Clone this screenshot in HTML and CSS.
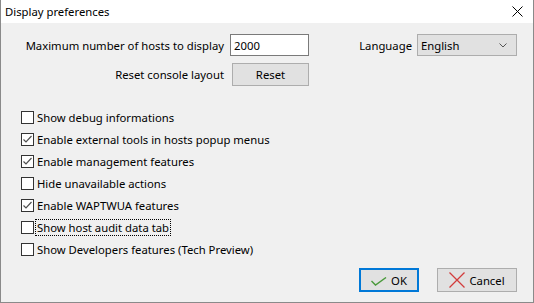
FILE: index.html
```html
<!DOCTYPE html>
<html lang="en">
<head>
  <meta charset="UTF-8" />
  <title>Display preferences</title>
  <link rel="stylesheet" href="styles.css">
</head>
<body>
  <div class="window">
    <div class="titlebar">
      <span class="title">Display preferences</span>
      <svg class="close" width="11" height="11" viewBox="0 0 11 11"><path d="M0.5 0.5 L10.5 10.5 M10.5 0.5 L0.5 10.5" stroke="#000" stroke-width="1" fill="none"/></svg>
    </div>
    <div class="content">
      <div class="top-grid">
        <label class="lbl">Maximum number of hosts to display</label>
        <div class="edit">2000</div>
        <span></span>
        <label class="lbl">Language</label>
        <div class="combo">English
          <svg class="chev" width="8" height="5" viewBox="0 0 8 5"><path d="M0.5 0.5 L4 4 L7.5 0.5" stroke="#555" fill="none"/></svg>
        </div>
        <label class="lbl">Reset console layout</label>
        <div class="btn reset-btn">Reset</div>
      </div>

      <div class="checks">
        <div class="check-row"><span class="box"></span><span>Show debug informations</span></div>
        <div class="check-row"><span class="box checked"><svg width="11" height="11" viewBox="0 0 11 11"><path d="M1.5 5.5 L4 8 L9.5 2" stroke="#505050" stroke-width="1.2" fill="none"/></svg></span><span>Enable external tools in hosts popup menus</span></div>
        <div class="check-row"><span class="box checked"><svg width="11" height="11" viewBox="0 0 11 11"><path d="M1.5 5.5 L4 8 L9.5 2" stroke="#505050" stroke-width="1.2" fill="none"/></svg></span><span>Enable management features</span></div>
        <div class="check-row"><span class="box"></span><span>Hide unavailable actions</span></div>
        <div class="check-row"><span class="box checked"><svg width="11" height="11" viewBox="0 0 11 11"><path d="M1.5 5.5 L4 8 L9.5 2" stroke="#505050" stroke-width="1.2" fill="none"/></svg></span><span>Enable WAPTWUA features</span></div>
        <div class="check-row"><span class="box"></span><span class="focused">Show host audit data tab</span></div>
        <div class="check-row"><span class="box"></span><span>Show Developers features (Tech Preview)</span></div>
      </div>

      <div class="actions">
        <div class="btn default-btn">
          <svg width="16" height="9" viewBox="0 0 16 9"><path d="M0.5 4 L4.5 8 L15 0.5" stroke="#4a9a3c" stroke-width="1.4" fill="none"/></svg>
          OK
        </div>
        <div class="btn">
          <svg width="16" height="16" viewBox="0 0 16 16"><path d="M0.5 0.5 L15.5 15.5 M15.5 0.5 L0.5 15.5" stroke="#d23c3c" stroke-width="1.3" fill="none"/></svg>
          Cancel
        </div>
      </div>
    </div>
  </div>
</body>
</html>
```

FILE: styles.css
```css
* {
  box-sizing: border-box;
}
body {
  margin: 0;
  font-family: 'Noto Sans', 'Segoe UI', sans-serif;
  font-size: 11.3px;
  color: #000;
  background: #fff;
}
.window {
  width: 534px;
  height: 303px;
  border: 1px solid #8a8a8a;
  border-top: none;
  background: #f0f0f0;
  display: flex;
  flex-direction: column;
}
.titlebar {
  height: 23px;
  background: #fff;
  display: flex;
  align-items: center;
  justify-content: space-between;
  padding: 0 10px 0 4px;
}
.title {
  margin-top: -1px;
}
.close {
  margin-top: -1px;
}
.content {
  flex: 1;
  display: flex;
  flex-direction: column;
}
.top-grid {
  display: grid;
  grid-template-columns: 223px 79px 1fr auto 100px;
  grid-template-rows: 22px 23px;
  column-gap: 6px;
  row-gap: 7px;
  margin-top: 11px;
  padding-right: 16px;
}
.top-grid .lbl {
  text-align: right;
  align-self: center;
  white-space: nowrap;
}
.top-grid .lbl:nth-of-type(2) {
  margin-right: -1px;
}
.edit {
  background: #fff;
  border: 1px solid #7a7a7a;
  padding: 0 3px;
  display: flex;
  align-items: center;
}
.combo {
  background: #e1e1e1;
  border: 1px solid #adadad;
  padding: 0 3px;
  display: flex;
  align-items: center;
  justify-content: space-between;
  padding-right: 9px;
}
.btn {
  background: #e1e1e1;
  border: 1px solid #adadad;
  display: flex;
  align-items: center;
  justify-content: center;
  gap: 4px;
}
.reset-btn {
  margin-left: 2px;
  width: 77px;
}
.checks {
  display: flex;
  flex-direction: column;
  margin-top: 20px;
  padding-left: 20px;
}
.check-row {
  height: 22px;
  display: flex;
  align-items: center;
  gap: 3px;
}
.box {
  width: 13px;
  height: 13px;
  border: 1px solid #333;
  background: #fff;
  display: flex;
  align-items: center;
  justify-content: center;
}
.focused {
  outline: 1px dotted #000;
  outline-offset: 0;
  padding: 0 1px 0 0;
  margin-left: -1px;
  padding-left: 1px;
}
.actions {
  display: flex;
  justify-content: flex-end;
  gap: 18px;
  margin-top: 8px;
  padding-right: 16px;
}
.actions .btn {
  height: 24px;
  width: 80px;
}
.default-btn {
  width: 60px !important;
  border: 2px solid #0078d7 !important;
}
.default-btn svg {
  margin-top: 2px;
}
```
